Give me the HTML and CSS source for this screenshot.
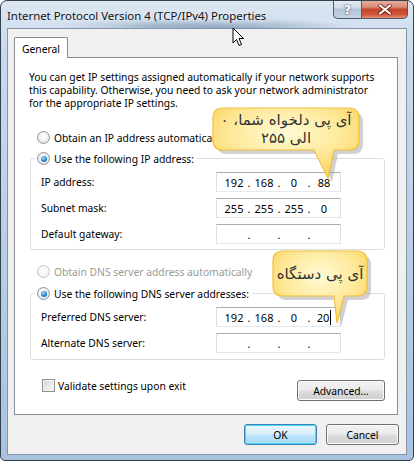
FILE: index.html
```html
<!DOCTYPE html>
<html lang="en">
<head>
  <meta charset="UTF-8">
  <title>Internet Protocol Version 4 (TCP/IPv4) Properties</title>
  <link rel="stylesheet" href="styles.css">
</head>
<body>

  <div class="window">
    <!-- Title bar -->
    <div class="titlebar">
      <span class="title">Internet Protocol Version 4 (TCP/IPv4) Properties</span>
      <div class="caption-btns">
        <span class="cap help">?</span>
        <span class="cap close">
          <svg width="14" height="11" viewBox="0 0 14 11">
            <path d="M2 1.5 L12 9.5 M12 1.5 L2 9.5" stroke="#6b1a0e" stroke-width="3.6" stroke-linecap="round"/>
            <path d="M2 1.5 L12 9.5 M12 1.5 L2 9.5" stroke="#fff" stroke-width="2.2" stroke-linecap="round"/>
          </svg>
        </span>
      </div>
    </div>

    <div class="client">
      <div class="tabs"><span class="tab">General</span></div>

      <div class="panel">
        <p class="intro">You can get IP settings assigned automatically if your network supports<br>
          this capability. Otherwise, you need to ask your network administrator<br>
          for the appropriate IP settings.</p>

        <div class="option first"><span class="radio"></span>Obtain an IP address automatically</div>

        <fieldset class="group">
          <legend class="option"><span class="radio checked"></span>Use the following IP address:</legend>
          <div class="field">
            <label>IP address:</label>
            <div class="ipbox"><span class="oct">192</span><span class="dot">.</span><span class="oct">168</span><span class="dot">.</span><span class="oct">0</span><span class="dot">.</span><span class="oct">88</span></div>
          </div>
          <div class="field">
            <label>Subnet mask:</label>
            <div class="ipbox"><span class="oct">255</span><span class="dot">.</span><span class="oct">255</span><span class="dot">.</span><span class="oct">255</span><span class="dot">.</span><span class="oct">0</span></div>
          </div>
          <div class="field">
            <label>Default gateway:</label>
            <div class="ipbox"><span class="oct"></span><span class="dot">.</span><span class="oct"></span><span class="dot">.</span><span class="oct"></span><span class="dot">.</span><span class="oct"></span></div>
          </div>
        </fieldset>

        <div class="option dns-auto disabled"><span class="radio"></span>Obtain DNS server address automatically</div>

        <fieldset class="group dns">
          <legend class="option"><span class="radio checked"></span>Use the following DNS server addresses:</legend>
          <div class="field">
            <label>Preferred DNS server:</label>
            <div class="ipbox"><span class="oct">192</span><span class="dot">.</span><span class="oct">168</span><span class="dot">.</span><span class="oct">0</span><span class="dot">.</span><span class="oct"><span class="caret">20</span></span></div>
          </div>
          <div class="field">
            <label>Alternate DNS server:</label>
            <div class="ipbox"><span class="oct"></span><span class="dot">.</span><span class="oct"></span><span class="dot">.</span><span class="oct"></span><span class="dot">.</span><span class="oct"></span></div>
          </div>
        </fieldset>

        <div class="bottom-row">
          <div class="option check-row"><span class="checkbox"></span>Validate settings upon exit</div>
          <span class="btn advanced">Advanced...</span>
        </div>
      </div>

      <div class="dialog-btns">
        <span class="btn default">OK</span>
        <span class="btn">Cancel</span>
      </div>
    </div>

    <!-- Callouts over the dialog -->
    <div class="callout callout-ip">
      <svg class="bubble" width="170" height="80" viewBox="0 0 170 80">
        <defs>
          <radialGradient id="fill1" cx="50%" cy="35%" r="70%">
            <stop offset="0" stop-color="#fffbd6"/>
            <stop offset="0.55" stop-color="#fee99a"/>
            <stop offset="1" stop-color="#fbcf55"/>
          </radialGradient>
        </defs>
        <path d="M16 5 H142 Q152 5 152 15 V37 Q152 47 142 47 H127 L121 75 L107 47 H16 Q6 47 6 37 V15 Q6 5 16 5 Z" fill="#9a9a9a" opacity="0.45" transform="translate(4 4)"/>
        <path d="M16 5 H142 Q152 5 152 15 V37 Q152 47 142 47 H127 L121 75 L107 47 H16 Q6 47 6 37 V15 Q6 5 16 5 Z" fill="url(#fill1)" stroke="#f2bf3e" stroke-width="1.2"/>
      </svg>
      <div class="callout-text" dir="rtl">آی پی دلخواه شما، ۰<br>الی ۲۵۵</div>
    </div>

    <div class="callout callout-dns">
      <svg class="bubble" width="120" height="80" viewBox="0 0 120 80">
        <defs>
          <radialGradient id="fill2" cx="50%" cy="35%" r="70%">
            <stop offset="0" stop-color="#fffbd6"/>
            <stop offset="0.55" stop-color="#fee99a"/>
            <stop offset="1" stop-color="#fbcf55"/>
          </radialGradient>
        </defs>
        <path d="M16 5 H90 Q100 5 100 15 V40 Q100 50 90 50 H77 L70 77 L67 50 H16 Q6 50 6 40 V15 Q6 5 16 5 Z" fill="#9a9a9a" opacity="0.45" transform="translate(4 4)"/>
        <path d="M16 5 H90 Q100 5 100 15 V40 Q100 50 90 50 H77 L70 77 L67 50 H16 Q6 50 6 40 V15 Q6 5 16 5 Z" fill="url(#fill2)" stroke="#f2bf3e" stroke-width="1.2"/>
      </svg>
      <div class="callout-text" dir="rtl">آی پی دستگاه</div>
    </div>

    <!-- Mouse pointer -->
    <svg class="pointer" width="14" height="20" viewBox="0 0 14 20">
      <path d="M1 1 L1 16 L4.5 12.5 L7 18.5 L9.5 17.5 L7 11.5 L11.5 11.5 Z" fill="#fff" stroke="#000" stroke-width="1" stroke-linejoin="round"/>
    </svg>
  </div>

</body>
</html>
```

FILE: styles.css
```css
body {
  margin: 0;
  background: #ffffff;
  font-family: "Noto Sans", sans-serif;
  font-size: 10.3px;
  color: #000;
}

.window {
  position: relative;
  width: 414px;
  height: 461px;
  box-sizing: border-box;
  border: 1px solid #33414f;
  border-radius: 7px 7px 5px 5px;
  padding: 0 6px;
  background:
    radial-gradient(ellipse 120px 10px at 230px 27px, rgba(70, 100, 140, 0.45), transparent),
    radial-gradient(ellipse 90px 8px at 150px 25px, rgba(90, 120, 150, 0.3), transparent),
    linear-gradient(180deg, #dbe6f1 0%, #c8d9ec 12%, #b7cde6 60%, #a9c2e0 100%);
  overflow: hidden;
}

/* Title bar */
.titlebar {
  height: 27px;
  display: flex;
  align-items: flex-start;
}

.title {
  margin-top: 7px;
  font-size: 11.4px;
  color: #111;
  text-shadow: 0 0 6px rgba(255, 255, 255, 0.9);
}

.caption-btns {
  display: flex;
  margin-left: auto;
  margin-top: -1px;
  margin-right: -1px;
}

.cap {
  height: 19px;
  box-sizing: border-box;
  border: 1px solid #4a5a6e;
  border-top: none;
  display: flex;
  align-items: center;
  justify-content: center;
}

.help {
  width: 28px;
  border-radius: 0 0 0 5px;
  border-right: none;
  background: linear-gradient(180deg, #e7eef6 0%, #cfdbe8 45%, #b2c3d6 50%, #c5d5e6 100%);
  color: #fff;
  font-family: "DejaVu Sans", sans-serif;
  font-weight: bold;
  font-size: 13px;
  text-shadow: 0 0 2px #44556a, 0 0 1px #44556a;
}

.close {
  width: 47px;
  border-radius: 0 0 5px 0;
  background: linear-gradient(180deg, #eab3a4 0%, #d98a74 40%, #c4432a 52%, #d0553b 80%, #e59076 100%);
}

/* Client area */
.client {
  height: 427px;
  box-sizing: border-box;
  border: 1px solid #8595a8;
  background: #f0f0f0;
  padding: 8px 7px 0 6px;
}

.tabs {
  display: flex;
}

.tab {
  position: relative;
  z-index: 1;
  height: 21px;
  box-sizing: border-box;
  padding: 4px 7px 0 7px;
  margin-bottom: -1px;
  background: #fff;
  border: 1px solid #898c95;
  border-bottom: none;
  border-radius: 2px 2px 0 0;
}

.panel {
  width: 384px;
  height: 358px;
  box-sizing: border-box;
  background: #fff;
  border: 1px solid #898c95;
  padding: 13px 12px 0 14px;
}

.intro {
  margin: 0;
  line-height: 13px;
  white-space: nowrap;
}

.option {
  display: flex;
  align-items: center;
  height: 15px;
  white-space: nowrap;
}

.option.first {
  margin: 20px 0 0 8px;
}

.radio {
  width: 13px;
  height: 13px;
  box-sizing: border-box;
  border-radius: 50%;
  border: 1px solid #8f9296;
  background: radial-gradient(circle at 50% 40%, #fff 0%, #f1f1f1 45%, #d8d8d8 100%);
  margin-right: 4px;
  position: relative;
  flex: none;
}

.radio.checked::after {
  content: "";
  position: absolute;
  left: 2.5px;
  top: 2.5px;
  width: 6px;
  height: 6px;
  border-radius: 50%;
  background: radial-gradient(circle at 40% 35%, #a9e3fb 0%, #2a8ad4 50%, #0d4c8c 100%);
}

.disabled {
  color: #9a9a9a;
}

.disabled .radio {
  border-color: #c2c4c6;
  background: radial-gradient(circle at 50% 40%, #fff 0%, #f4f4f4 60%, #e6e6e6 100%);
}

/* Group boxes */
.group {
  margin: 6px 0 0 1px;
  width: 355px;
  box-sizing: border-box;
  border: 1px solid #d5dfe5;
  border-radius: 3px;
  padding: 6px 10px 5px 10px;
}

.group legend {
  padding: 0 3px 0 2px;
  margin-left: -6px;
}

.group.dns {
  margin-top: 7px;
  padding-bottom: 6px;
}

.field {
  display: flex;
  align-items: center;
  height: 20px;
  margin-bottom: 6px;
}

.field:last-child {
  margin-bottom: 0;
}

.field label {
  width: 175px;
}

.ipbox {
  display: flex;
  align-items: center;
  width: 125px;
  height: 20px;
  box-sizing: border-box;
  border: 1px solid #dbdfe6;
  border-top-color: #abadb3;
  border-bottom-color: #e3e9ef;
  padding-left: 5px;
  font-size: 11px;
}

.oct {
  width: 24px;
  text-align: center;
}

.dot {
  width: 6px;
  text-align: center;
}

.caret {
  border-right: 1px solid #000;
  padding-right: 1px;
}

.dns-auto {
  margin: 14px 0 0 8px;
}

.bottom-row {
  display: flex;
  align-items: flex-start;
  margin-top: 18px;
}

.check-row {
  margin-left: 13px;
}

.checkbox {
  width: 13px;
  height: 13px;
  box-sizing: border-box;
  border: 1px solid #8f8f8f;
  background: linear-gradient(135deg, #d3d3d3 0%, #ececec 60%, #f7f7f7 100%);
  box-shadow: inset 0 0 0 1px #f4f4f4;
  margin-right: 3px;
}

/* Buttons */
.btn {
  display: flex;
  align-items: center;
  justify-content: center;
  height: 21px;
  box-sizing: border-box;
  border: 1px solid #707070;
  border-radius: 3px;
  background: linear-gradient(180deg, #f2f2f2 0%, #ebebeb 48%, #dddddd 52%, #cfcfcf 100%);
  box-shadow: inset 0 0 0 1px #fcfcfc;
}

.advanced {
  width: 88px;
  margin-left: auto;
  margin-top: 2px;
}

.dialog-btns {
  display: flex;
  justify-content: flex-end;
  gap: 9px;
  margin-top: 9px;
}

.dialog-btns .btn {
  width: 73px;
}

.btn.default {
  border-color: #3c7fb1;
  box-shadow: inset 0 0 0 1px #48d8fb;
  background: linear-gradient(180deg, #eaf6fd 0%, #d9f0fc 48%, #bee6fd 52%, #a7d9f5 100%);
}

/* Callouts */
.callout {
  position: absolute;
}

.bubble {
  position: absolute;
  left: 0;
  top: 0;
}

.callout-text {
  position: relative;
  font-family: "DejaVu Sans", sans-serif;
  font-size: 15px;
  color: #333;
  text-align: center;
  line-height: 18px;
}

.callout-ip {
  left: 206px;
  top: 102px;
  width: 170px;
  height: 80px;
}

.callout-ip .callout-text {
  width: 146px;
  margin: 8px 0 0 6px;
}

.callout-dns {
  left: 266px;
  top: 245px;
  width: 120px;
  height: 80px;
}

.callout-dns .callout-text {
  width: 94px;
  margin: 19px 0 0 6px;
}

.pointer {
  position: absolute;
  left: 231px;
  top: 26px;
}
```
